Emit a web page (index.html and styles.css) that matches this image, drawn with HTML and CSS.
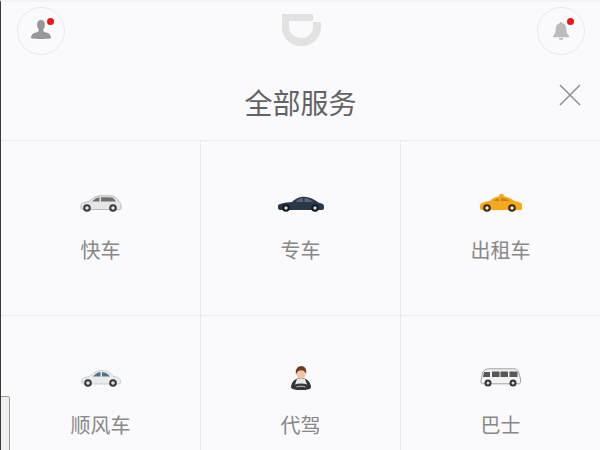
FILE: index.html
```html
<!DOCTYPE html>
<html lang="en">
<head>
    <meta charset="UTF-8">
    <meta name="viewport" content="width=device-width, initial-scale=1.0">
    <title>全部服务</title>
    <link rel="stylesheet" href="styles.css">
</head>
<body>
    <div class="page">
        <div class="topbar">
            <div class="round-btn">
                <svg class="person-icon" width="20" height="19" viewBox="0 0 20 19">
                    <path fill="#979797" d="M10 0c2.500 0 3.900 1.900 3.900 4.500 0 2.200-.8 4-1.800 5.200 0 1.600 1 2.300 3 2.900 2.400.7 4.500 1.700 4.900 4.900 0 .6-.5.9-1.200 1C17 18.800 13.500 19 10 19s-7-.2-8.800-.5c-.7-.1-1.200-.4-1.200-1 .4-3.200 2.500-4.200 4.900-4.900 2-.6 3-1.300 3-2.900-1-1.200-1.800-3-1.800-5.200C6.100 1.900 7.500 0 10 0z"/>
                </svg>
                <span class="dot"></span>
            </div>
            <svg class="logo" width="39" height="32" viewBox="0 0 39 32">
                <path fill="#e3e2e3" d="M0 0H31V7H7V12C7 19 12 24 19.500 24C26 24 31 19 31 13V8H39V13C39 24 30 32 19.500 32C9 32 0 24 0 13Z"/>
            </svg>
            <div class="round-btn">
                <svg class="bell-icon" width="16" height="18" viewBox="0 0 16 18">
                    <path fill="#bdbcbd" d="M8 0c.8 0 1.300.6 1.300 1.300C12 2 13.300 4.300 13.300 7c0 3 .7 5 2.700 7v1.200H0V14c2-2 2.700-4 2.700-7C2.700 4.300 4 2 6.700 1.300 6.700.6 7.200 0 8 0zM5.800 16h4.400c0 1.200-1 2-2.200 2s-2.200-.8-2.200-2z"/>
                </svg>
                <span class="dot"></span>
            </div>
        </div>

        <div class="title-row">
            <h1>全部服务</h1>
            <svg class="close" width="22" height="22" viewBox="0 0 22 22">
                <path fill="none" stroke="#8f8f8f" stroke-width="1.500" d="M1 1l20 20M21 1L1 21"/>
            </svg>
        </div>

        <div class="services">
            <div class="service">
                <div class="vehicle-wrap">
                    <svg width="42" height="17" viewBox="0 0 42 17">
                        <path fill="#e6e6e6" stroke="#a0a0a0" stroke-width=".7" d="M1 11c0-2 2-3.500 8-4.500C12 4 15 1 20 .8c5-.2 10-.2 13 .4 2.500.5 4.500 3 6 5.500 1.200 1 2 2.500 2 4.300v2c0 .8-.5 1.500-1.500 1.500H3C1.800 14.500 1 14 1 13z"/>
                        <path fill="#6e7073" d="M12 6.500c2-2 4.500-4 7.500-4.300V6.500zM21 2.200c3.500-.1 8-.1 11 .3 1.500.5 3 2.400 4 4H21z"/>
                        <circle cx="7" cy="13" r="3.800" fill="#3a3a3a"/><circle cx="7" cy="13" r="1.800" fill="#e2e2e2"/>
                        <circle cx="33" cy="13" r="3.800" fill="#3a3a3a"/><circle cx="33" cy="13" r="1.800" fill="#e2e2e2"/>
                    </svg>
                </div>
                <span class="service-name">快车</span>
            </div>
            <div class="service">
                <div class="vehicle-wrap">
                    <svg width="46" height="16" viewBox="0 0 46 16">
                        <path fill="#2a3749" d="M0 9.500C1 7.500 7 6.500 14 6 17.500 3 20.500 .8 26 .8c5 0 9.500 2.200 15 6 2.500.4 4.500 1.200 5 3v2.500c0 1-1 1.500-2 1.700H2c-1.200-.2-2-.8-2-2z"/>
                        <path fill="#566579" d="M17.500 6c2-2 4-3.700 7.500-4v4zM26.500 2c3 .1 6 1.700 9 4h-9z"/>
                        <circle cx="8" cy="12" r="3.800" fill="#14171d"/><circle cx="8" cy="12" r="1.700" fill="#d5d8dc"/>
                        <circle cx="37" cy="12" r="3.800" fill="#14171d"/><circle cx="37" cy="12" r="1.700" fill="#d5d8dc"/>
                    </svg>
                </div>
                <span class="service-name">专车</span>
            </div>
            <div class="service">
                <div class="vehicle-wrap">
                    <svg width="42" height="19" viewBox="0 0 42 19">
                        <path fill="#f6a821" d="M0 13c0-2.700 3.500-4.300 9.500-5 3-2.500 5.500-4.300 9-4.500L20 1h3l1.500 2.500c4 .2 7 2.200 10 4.500 4 .5 7 1.500 7.500 3.500v4c0 1-1 1.500-2 1.500H2c-1.200 0-2-.8-2-2z"/>
                        <path fill="#c28716" d="M13.500 8c1.500-1.500 3.300-2.500 5.500-2.800V8zM21 5c3.500 0 6.500 1.300 9 3h-9z"/>
                        <circle cx="7" cy="15" r="3.800" fill="#3b2c12"/><circle cx="7" cy="15" r="1.700" fill="#eee"/>
                        <circle cx="32" cy="15" r="3.800" fill="#3b2c12"/><circle cx="32" cy="15" r="1.700" fill="#eee"/>
                    </svg>
                </div>
                <span class="service-name">出租车</span>
            </div>
            <div class="service">
                <div class="vehicle-wrap">
                    <svg width="40" height="17" viewBox="0 0 40 17">
                        <path fill="#e9ebec" stroke="#a9aeb2" stroke-width=".5" d="M.5 11c0-2.200 3-3.600 8-4.400C12 3 16 .5 21 .5c5 0 9 2.500 11.500 6 3.500.6 7 1.600 7 4v2c0 1-.8 1.500-2 1.500H2.500c-1.200 0-2-.8-2-2z"/>
                        <path fill="#557283" d="M12 6.500c2-2.300 4.500-4 7.500-4.500v4.500zM21 2c3.200.1 6 2 8 4.500h-8z"/>
                        <circle cx="7" cy="13" r="3.800" fill="#33383b"/><circle cx="7" cy="13" r="1.800" fill="#e2e2e2"/>
                        <circle cx="32" cy="13" r="3.800" fill="#33383b"/><circle cx="32" cy="13" r="1.800" fill="#e2e2e2"/>
                    </svg>
                </div>
                <span class="service-name">顺风车</span>
            </div>
            <div class="service">
                <div class="vehicle-wrap">
                    <svg class="driver" width="20" height="24" viewBox="0 0 20 24">
                        <path fill="#34353a" d="M1.500 23c-1.500-.6-1.700-2-1.300-3.500C1 16 3.500 13.500 6.500 12.500h7c3 1 5.500 3.500 6.300 7 .4 1.500.2 2.900-1.300 3.500-2.500 1-6 1-8.500 1s-6-0-8.500-1z"/>
                        <path fill="#e6e9e6" d="M6 13h8l2 5.500c-3.500-1.400-8.500-1.400-12 0z"/>
                        <ellipse cx="10" cy="7.500" rx="4.600" ry="5.200" fill="#f1c5a2"/>
                        <path fill="#6b3f23" d="M5 8.500C4 3.500 6.500 0 10.200 0s5.800 3 4.900 8c-.8-2.500-2.600-3.800-5.100-3.800-2.200 0-4 1.300-5 4.300z"/>
                        <path fill="none" stroke="#e6e9e6" stroke-width=".8" d="M5.500 21c2.500-1 6.500-1 9 0"/>
                    </svg>
                </div>
                <span class="service-name">代驾</span>
            </div>
            <div class="service">
                <div class="vehicle-wrap">
                    <svg width="41" height="19" viewBox="0 0 41 19">
                        <path fill="#f3f3f3" stroke="#8b8b8b" stroke-width=".8" d="M1 13l1.500-8C3.500 2.500 6 .8 9 .8h25c2 0 3.500 1 4.500 3l2 7v3.500c0 1-.7 1.500-1.500 1.500H2.500C1.500 15.800 1 15 1 14z"/>
                        <path fill="#55575a" d="M4 4h6v5H3zM12 3.500h7.500V9H12zM20.500 3.500H28V9h-7.500zM29.500 3.500H37.500V9h-8z"/>
                        <circle cx="8" cy="15" r="3.500" fill="#333"/><circle cx="8" cy="15" r="1.500" fill="#ddd"/>
                        <circle cx="33" cy="15" r="3.500" fill="#333"/><circle cx="33" cy="15" r="1.500" fill="#ddd"/>
                    </svg>
                </div>
                <span class="service-name">巴士</span>
            </div>
        </div>

        <div class="side-handle"></div>
    </div>
</body>
</html>
```

FILE: styles.css
```css
html, body {
    margin: 0;
    padding: 0;
}
body {
    width: 600px;
    height: 450px;
    overflow: hidden;
    background-color: #faf9fb;
    font-family: "Liberation Sans", "Noto Sans CJK SC", sans-serif;
}
.page {
    position: relative;
    height: 450px;
    overflow: hidden;
    border-left: 1px solid #3a3a3a;
    border-top: 2px solid #f4f3f5;
    box-sizing: border-box;
}
.topbar {
    display: flex;
    justify-content: space-between;
    align-items: flex-start;
    padding: 5px 15px 0 16px;
    height: 55px;
    box-sizing: border-box;
}
.round-btn {
    position: relative;
    display: flex;
    align-items: center;
    justify-content: center;
    width: 48px;
    height: 48px;
    box-sizing: border-box;
    border: 1px solid #e8e7e9;
    border-radius: 50%;
}
.person-icon {
    margin-bottom: 4px;
}
.bell-icon {
    margin-bottom: 1px;
}
.dot {
    position: absolute;
    top: 10px;
    right: 10px;
    width: 7px;
    height: 7px;
    border-radius: 50%;
    background-color: #f01414;
}
.logo {
    margin-top: 7px;
}
.title-row {
    position: relative;
    display: flex;
    align-items: center;
    justify-content: center;
    height: 83px;
    border-bottom: 1px solid #e9e8ea;
}
.title-row h1 {
    margin: 0;
    padding-top: 7px;
    font-size: 28px;
    font-weight: normal;
    color: #636363;
}
.close {
    position: absolute;
    top: 27px;
    right: 19px;
}
.services {
    display: grid;
    grid-template-columns: 200px 200px 199px;
    grid-auto-rows: 175px;
}
.service {
    display: flex;
    flex-direction: column;
    align-items: center;
    box-sizing: border-box;
    border-right: 1px solid #e9e8ea;
    border-bottom: 1px solid #e9e8ea;
}
.service:nth-child(3n) {
    border-right: none;
}
.vehicle-wrap {
    display: flex;
    align-items: flex-end;
    height: 71px;
}
.vehicle-wrap svg {
    filter: blur(0.3px);
}
.driver {
    margin-bottom: -3px;
}
.service-name {
    margin-top: 23px;
    font-size: 20px;
    color: #888888;
}
.side-handle {
    position: absolute;
    left: -1px;
    top: 394px;
    width: 10px;
    height: 60px;
    box-sizing: border-box;
    border: 1px solid #9a9a9a;
    border-radius: 2px;
    background-color: #f0f0f1;
}
```
